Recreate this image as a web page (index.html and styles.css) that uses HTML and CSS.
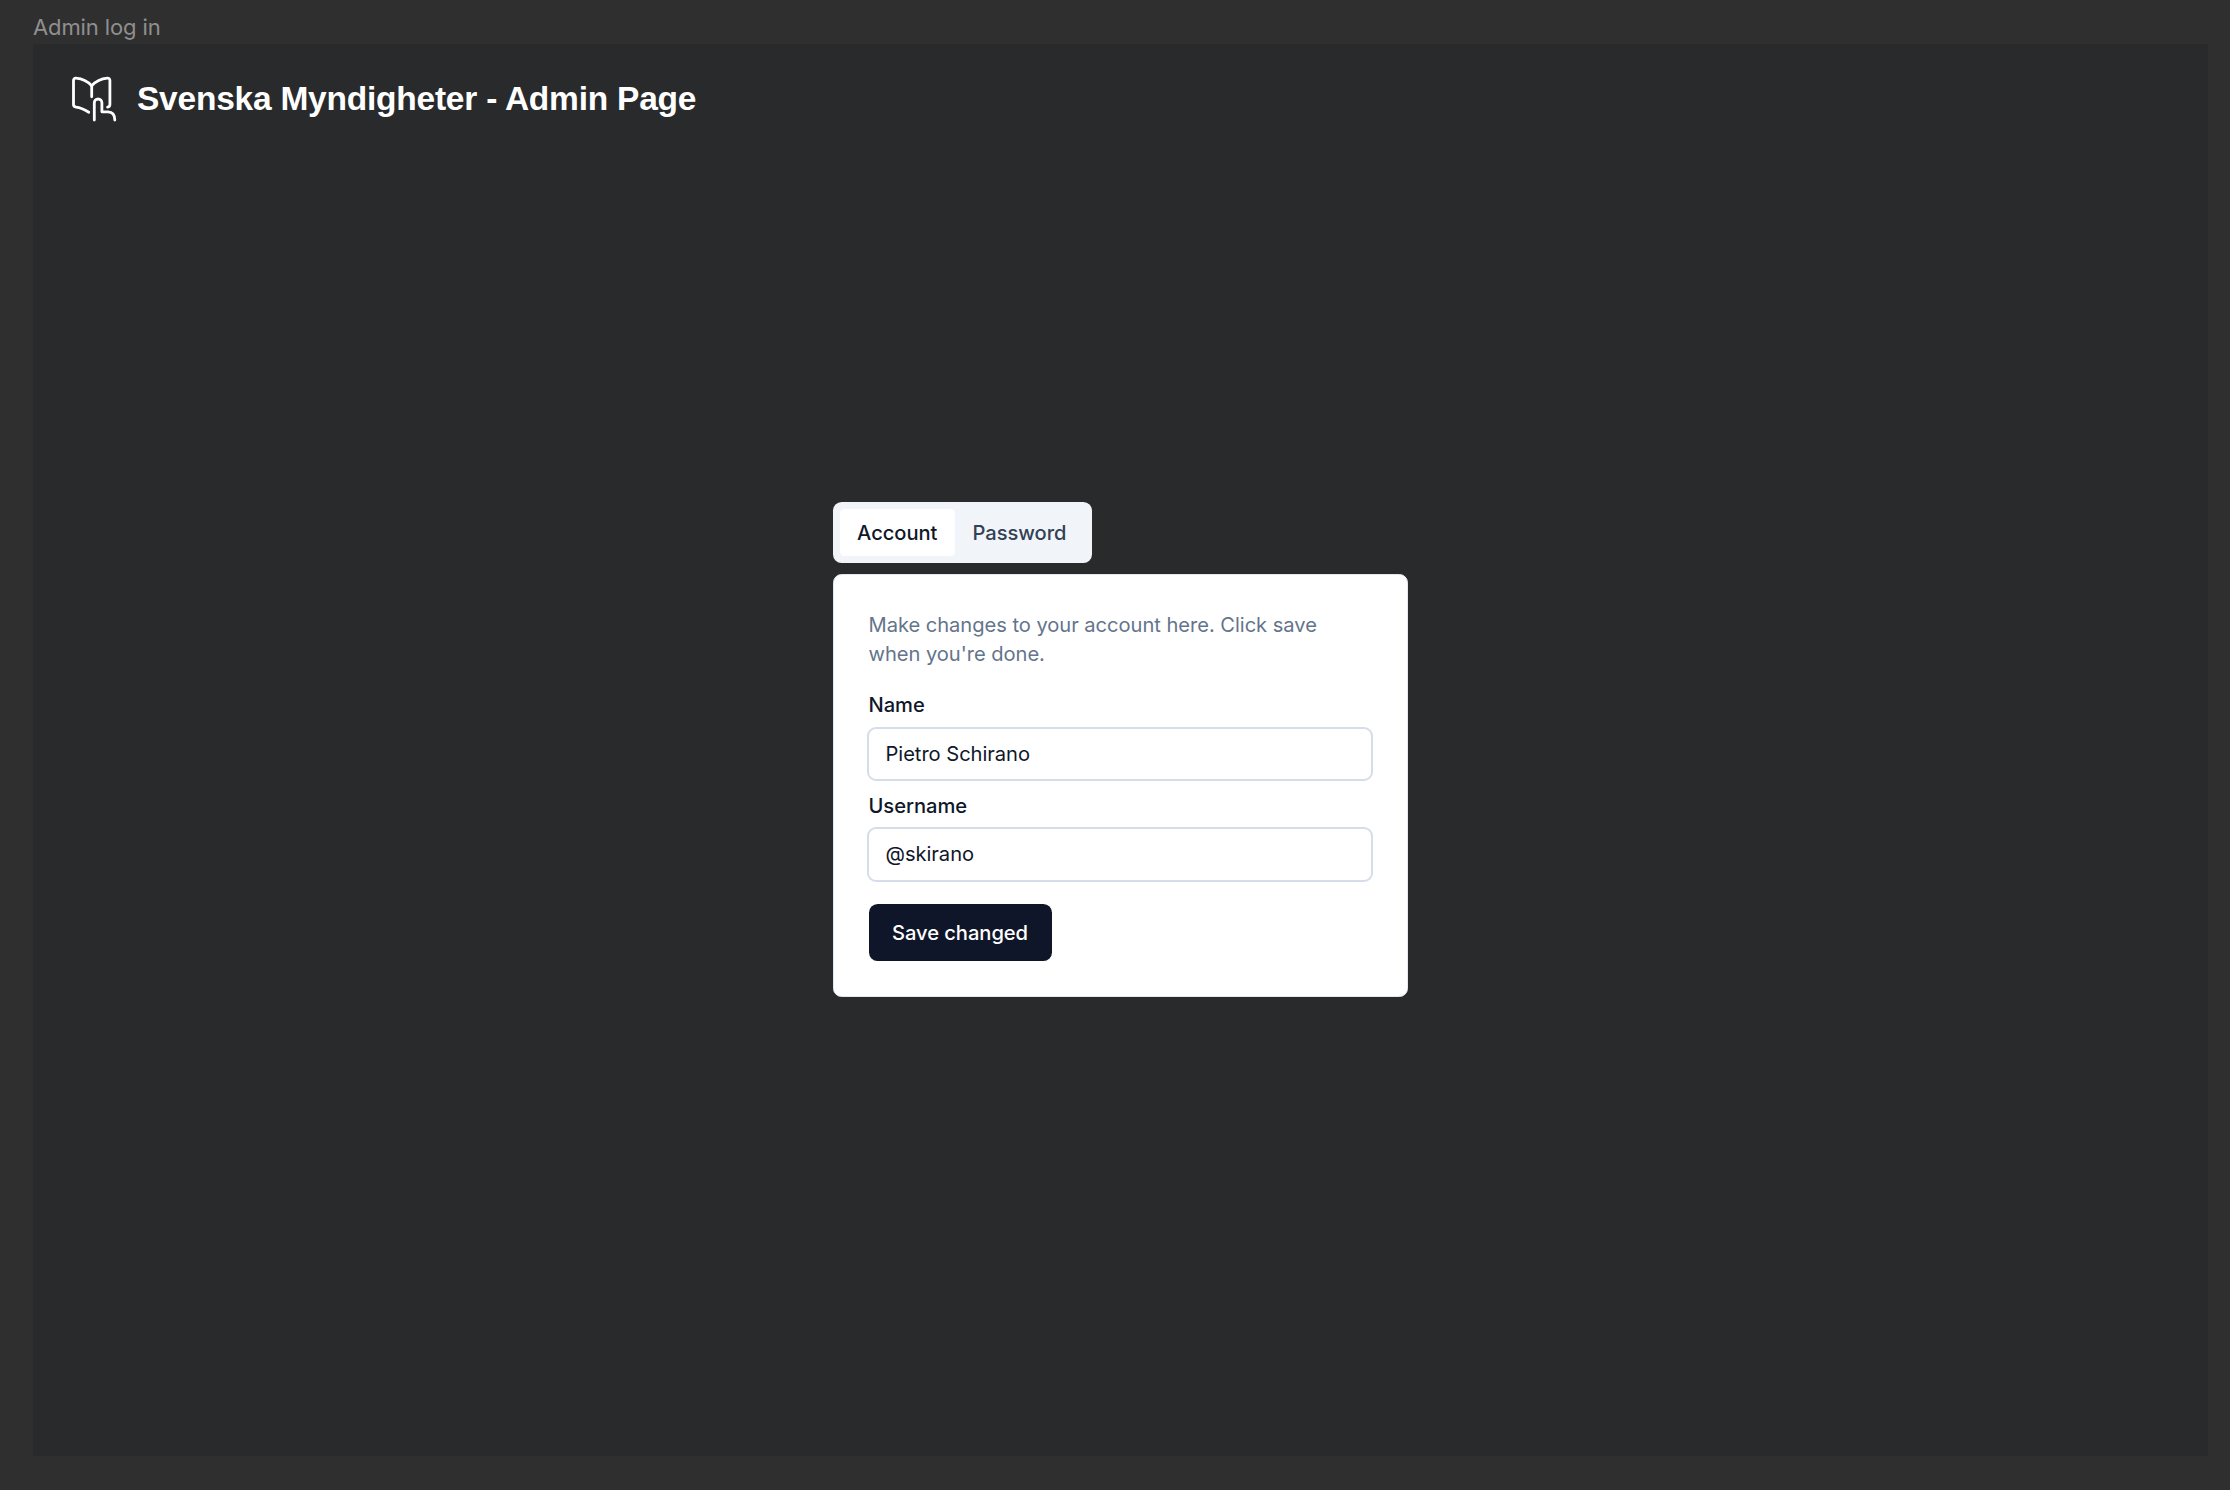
FILE: index.html
```html
<!DOCTYPE html>
<html lang="en">
<head>
<meta charset="utf-8">
<title>Admin log in</title>
<link rel="stylesheet" href="styles.css">
</head>
<body>
<div class="frame-label"><span>Admin log in</span></div>
<main class="frame">
  <header class="header">
    <svg class="logo" viewBox="0 0 46 46" fill="none" stroke="#fff" stroke-width="2.8" stroke-linecap="round" stroke-linejoin="round">
      <path d="M20.7 20.8V9.8C17.2 6 11.7 2.8 5.1 2.2Q2.5 2 2.5 4.6V28.6Q2.5 30.8 5 31.1C9.7 31.6 13.7 33.6 17.8 36.2"/>
      <path d="M20.7 9.8C24.2 6 29.7 2.8 36.3 2.2Q38.9 2 38.9 4.6V28.6Q38.9 30.8 36.6 31.1"/>
      <path d="M23.3 44V26.8A3.8 3.8 0 0 1 30.9 26.8V35.8H37Q43.8 36 43.8 44"/>
    </svg>
    <h1 class="title">Svenska Myndigheter - Admin Page</h1>
  </header>
  <section class="panel">
    <div class="tabs">
      <button class="tab tab-active"><span>Account</span></button>
      <button class="tab"><span>Password</span></button>
    </div>
    <form class="card">
      <p class="hint">Make changes to your account here. Click save<br>when you're done.</p>
      <label class="label" for="name">Name</label>
      <input class="input" id="name" value="Pietro Schirano">
      <label class="label label-username" for="username">Username</label>
      <input class="input" id="username" value="@skirano">
      <button class="save" type="button">Save changed</button>
    </form>
  </section>
</main>
</body>
</html>
```
FILE: styles.css
```css
* { box-sizing: border-box; }

body {
  margin: 0;
  height: 1490px;
  padding: 0 22.5px 34.5px 33px;
  display: flex;
  flex-direction: column;
  background: #2f2f2f;
  font-family: Inter, "Liberation Sans", sans-serif;
  font-size: 20.125px;
  letter-spacing: -0.03px;
  overflow: hidden;
}

.frame-label {
  height: 43.5px;
  padding-top: 14px;
  line-height: 27px;
  font-size: 22px;
  letter-spacing: -0.12px;
  color: #8f8f8f;
}

.frame {
  flex: 1;
  background: #292a2c;
}

.header {
  display: flex;
  align-items: center;
  height: 110px;
  padding-left: 38px;
}

.logo { width: 46px; height: 46px; }

.title {
  margin: 0 0 0 20px;
  font: bold 33.5px/40px "Liberation Sans", Arial, sans-serif;
  letter-spacing: -0.23px;
  color: #fff;
  white-space: nowrap;
}

.panel {
  width: 575.5px;
  margin: 348.5px 0 0 799.5px;
}

.tabs {
  display: flex;
  width: 259.5px;
  height: 60.5px;
  padding: 7px;
  border-radius: 8.6px;
  background: #f1f5f9;
}

.tab {
  height: 46.5px;
  width: 115.5px;
  padding: 1.5px 0 0;
  border: 0;
  border-radius: 4.3px;
  background: transparent;
  font: 500 20.125px/28.75px Inter, sans-serif;
  letter-spacing: -0.03px;
  color: #334155;
  text-align: center;
}

.tab + .tab { width: 129px; }

.tab-active {
  background: #fff;
  color: #0f172a;
}

.card {
  display: flex;
  flex-direction: column;
  height: 423px;
  margin-top: 11.5px;
  padding: 36px 35px 35px;
  border: 1px solid #e2e8f0;
  border-radius: 8.6px;
  background: #fff;
}

.hint {
  margin: 0 0 22px;
  line-height: 28.75px;
  color: #64748b;
  white-space: nowrap;
}

.label {
  height: 36.5px;
  line-height: 28.75px;
  font-weight: 500;
  color: #0f172a;
}

.label-username { padding-top: 1px; }

.input {
  flex: none;
  width: 506px;
  height: 54.5px;
  margin: 0 0 9.5px -1.5px;
  padding: 0 16.5px;
  border: 2px solid #d5dde9;
  border-radius: 9px;
  background: #fff;
  font: 400 20.125px Inter, sans-serif;
  letter-spacing: -0.03px;
  color: #0f172a;
}

.save {
  width: 183px;
  height: 57.5px;
  margin-top: 12.5px;
  padding: 1.5px 0 0;
  border: 0;
  border-radius: 8.6px;
  background: #0f1629;
  font: 500 20.125px Inter, sans-serif;
  letter-spacing: -0.03px;
  color: #fff;
}
```
